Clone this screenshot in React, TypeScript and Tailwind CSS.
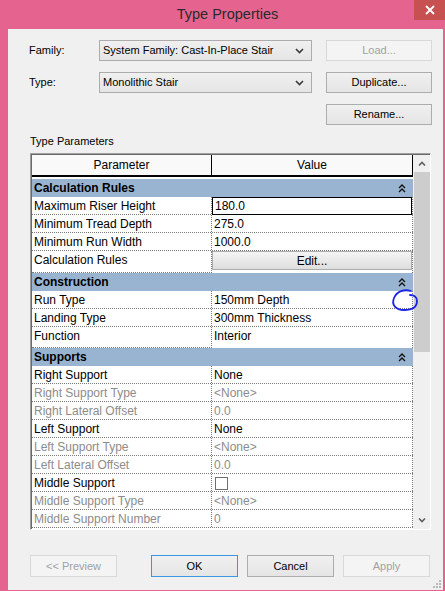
import React from 'react'

type Row = {
  name: string
  value?: string
  kind?: 'text' | 'focus' | 'button' | 'check'
  dim?: boolean
  h?: string
}

type Group = { title: string; rows: Row[] }

const groups: Group[] = [
  {
    title: 'Calculation Rules',
    rows: [
      { name: 'Maximum Riser Height', value: '180.0', kind: 'focus' },
      { name: 'Minimum Tread Depth', value: '275.0' },
      { name: 'Minimum Run Width', value: '1000.0' },
      { name: 'Calculation Rules', value: 'Edit...', kind: 'button', h: 'h-[22px]' },
    ],
  },
  {
    title: 'Construction',
    rows: [
      { name: 'Run Type', value: '150mm Depth' },
      { name: 'Landing Type', value: '300mm Thickness' },
      { name: 'Function', value: 'Interior', h: 'h-[21px]' },
    ],
  },
  {
    title: 'Supports',
    rows: [
      { name: 'Right Support', value: 'None' },
      { name: 'Right Support Type', value: '<None>', dim: true },
      { name: 'Right Lateral Offset', value: '0.0', dim: true },
      { name: 'Left Support', value: 'None' },
      { name: 'Left Support Type', value: '<None>', dim: true },
      { name: 'Left Lateral Offset', value: '0.0', dim: true },
      { name: 'Middle Support', kind: 'check' },
      { name: 'Middle Support Type', value: '<None>', dim: true },
      { name: 'Middle Support Number', value: '0', dim: true },
    ],
  },
]

const DoubleUp = () => (
  <svg width="8" height="9" viewBox="0 0 8 9" fill="none" stroke="#111" strokeWidth="1.4">
    <path d="M1 4 L4 1 L7 4" />
    <path d="M1 8 L4 5 L7 8" />
  </svg>
)

const ComboArrow = () => (
  <svg width="9" height="6" viewBox="0 0 9 6" fill="none" stroke="#3a3a3a" strokeWidth="1.6">
    <path d="M1 1 L4.5 4.5 L8 1" />
  </svg>
)

const Combo = ({ text }: { text: string }) => (
  <div className="w-[213px] h-[21px] flex items-center justify-between pl-[3px] pr-[7px] border border-[#acacac] bg-gradient-to-b from-[#f0f0f0] to-[#e5e5e5]">
    <span>{text}</span>
    <ComboArrow />
  </div>
)

const Btn = ({
  label,
  disabled,
  primary,
  w = 'w-full',
  h = 'h-[22px]',
}: {
  label: string
  disabled?: boolean
  primary?: boolean
  w?: string
  h?: string
}) => (
  <div
    className={`${w} ${h} flex items-center justify-center border ${
      disabled
        ? 'border-[#d9d9d9] bg-[#f4f4f4] text-[#a2a2a2]'
        : primary
        ? 'border-[#3c96e6] bg-gradient-to-b from-[#f0f0f0] to-[#e5e5e5] text-black'
        : 'border-[#adadad] bg-gradient-to-b from-[#f0f0f0] to-[#e5e5e5] text-black'
    }`}
  >
    {label}
  </div>
)

const ParamRow = ({ row }: { row: Row }) => {
  const tone = row.dim ? 'text-[#8c8c8c]' : 'text-black'
  return (
    <div className={`flex ${row.h ?? 'h-[18px]'} ${row.h ? '' : 'border-b border-dotted border-[#7a7a7a]'}`}>
      <div className={`w-[180px] shrink-0 pl-[2px] leading-[18px] border-r border-dotted border-[#7a7a7a] ${tone} ${row.h ? 'border-b' : ''}`}>
        {row.name}
      </div>
      <div className="flex-1 border-r border-dotted border-[#7a7a7a]">
        {row.kind === 'focus' && (
          <div className="h-[18px] border border-black pl-[2px] leading-[16px]">{row.value}</div>
        )}
        {row.kind === 'button' && (
          <div className="h-[19px] flex items-center justify-center border border-[#adadad] bg-gradient-to-b from-[#f4f4f4] to-[#dedede]">
            {row.value}
          </div>
        )}
        {row.kind === 'check' && (
          <div className="pl-[3px] pt-[3px]">
            <div className="w-[13px] h-[13px] border border-[#707070] bg-white" />
          </div>
        )}
        {(!row.kind || row.kind === 'text') && (
          <div className={`pl-[2px] leading-[18px] ${tone}`}>{row.value}</div>
        )}
      </div>
    </div>
  )
}

export default function App() {
  return (
    <div
      className="relative w-[445px] h-[591px] bg-[#e4648f] flex flex-col text-[12px] text-black"
      style={{ fontFamily: '"Liberation Sans", Arial, sans-serif' }}
    >
      {/* title bar */}
      <div className="h-[29px] shrink-0 flex items-center justify-center pl-[10px] text-[14.5px] text-[#2a2a2a]">
        Type Properties
      </div>
      <div className="absolute top-0 right-0 w-[31px] h-[20px] bg-[#c75050] flex items-center justify-center">
        <svg width="10" height="10" viewBox="0 0 10 10" stroke="white" strokeWidth="1.8">
          <path d="M1 1 L9 9 M9 1 L1 9" />
        </svg>
      </div>

      {/* client area */}
      <div className="flex-1 ml-[8px] mr-[2px] mb-[1px] bg-[#f0f0f0] flex flex-col pl-[21px]">
        <div className="grid grid-cols-[70px_227px_106px] gap-y-[11px] pt-[11px] items-center text-[11px]">
          <div className="leading-[21px]">Family:</div>
          <Combo text="System Family: Cast-In-Place Stair" />
          <Btn label="Load..." disabled h="h-[21px]" />

          <div className="leading-[21px]">Type:</div>
          <Combo text="Monolithic Stair" />
          <Btn label="Duplicate..." h="h-[21px]" />

          <div />
          <div />
          <Btn label="Rename..." h="h-[21px]" />
        </div>

        <div className="mt-[9px] pl-[1px] leading-[14px] text-[11px]">Type Parameters</div>

        {/* parameter table */}
        <div className="relative mt-[5px] ml-[1px] w-[401px] h-[377px] border border-[#a0a0a0] border-r-white border-b-white">
          <div className="h-full flex border-t border-l border-[#696969] bg-white">
            <div className="w-[381px] flex flex-col">
              <div className="h-[22px] flex border-b-2 border-black bg-[#f9f9f9]">
                <div className="w-[180px] shrink-0 border-r border-black flex items-center justify-center">Parameter</div>
                <div className="flex-1 border-r border-black flex items-center justify-center">Value</div>
              </div>
              <div className="h-[2px]" />
              {groups.map((g) => (
                <div key={g.title}>
                  <div className="h-[18px] bg-[#99b4d1] flex items-center justify-between pl-[2px] pr-[7px] font-bold">
                    <span>{g.title}</span>
                    <DoubleUp />
                  </div>
                  {g.rows.map((r) => (
                    <ParamRow key={r.name} row={r} />
                  ))}
                </div>
              ))}
            </div>

            {/* vertical scrollbar */}
            <div className="flex-1 flex flex-col bg-[#f0f0f0] pl-[1px]">
              <div className="h-[17px] flex items-center justify-center">
                <svg width="8" height="5" viewBox="0 0 8 5" fill="none" stroke="#606060" strokeWidth="1.6">
                  <path d="M1 4.5 L4 1.5 L7 4.5" />
                </svg>
              </div>
              <div className="h-[180px] bg-[#cdcdcd]" />
              <div className="flex-1" />
              <div className="h-[17px] flex items-center justify-center">
                <svg width="8" height="5" viewBox="0 0 8 5" fill="none" stroke="#606060" strokeWidth="1.6">
                  <path d="M1 0.5 L4 3.5 L7 0.5" />
                </svg>
              </div>
            </div>
          </div>

          {/* pen mark */}
          <svg className="absolute left-[355px] top-[133px]" width="34" height="28" viewBox="0 0 34 28" fill="none" stroke="#1a24e6" strokeWidth="1.8" strokeLinecap="round">
            <path d="M25 4 C18 2 11 4 8 11 C5 18 10 23 18 23 C26 23 31 20 31 14 C31 10 28 8 24 8" />
          </svg>
        </div>

        {/* dialog buttons */}
        <div className="flex mt-[25px] pl-[1px] text-[11px]">
          <Btn label="<< Preview" disabled w="w-[87px]" />
          <div className="flex gap-[9px] ml-[34px]">
            <Btn label="OK" primary w="w-[87px]" />
            <Btn label="Cancel" w="w-[87px]" />
            <Btn label="Apply" disabled w="w-[87px]" />
          </div>
        </div>
      </div>

      {/* size grip */}
      <svg className="absolute right-[4px] bottom-[3px]" width="8" height="8" viewBox="0 0 8 8" fill="#b8b8b8">
        <rect x="6" y="0" width="2" height="2" />
        <rect x="3" y="3" width="2" height="2" />
        <rect x="6" y="3" width="2" height="2" />
        <rect x="0" y="6" width="2" height="2" />
        <rect x="3" y="6" width="2" height="2" />
        <rect x="6" y="6" width="2" height="2" />
      </svg>
    </div>
  )
}
